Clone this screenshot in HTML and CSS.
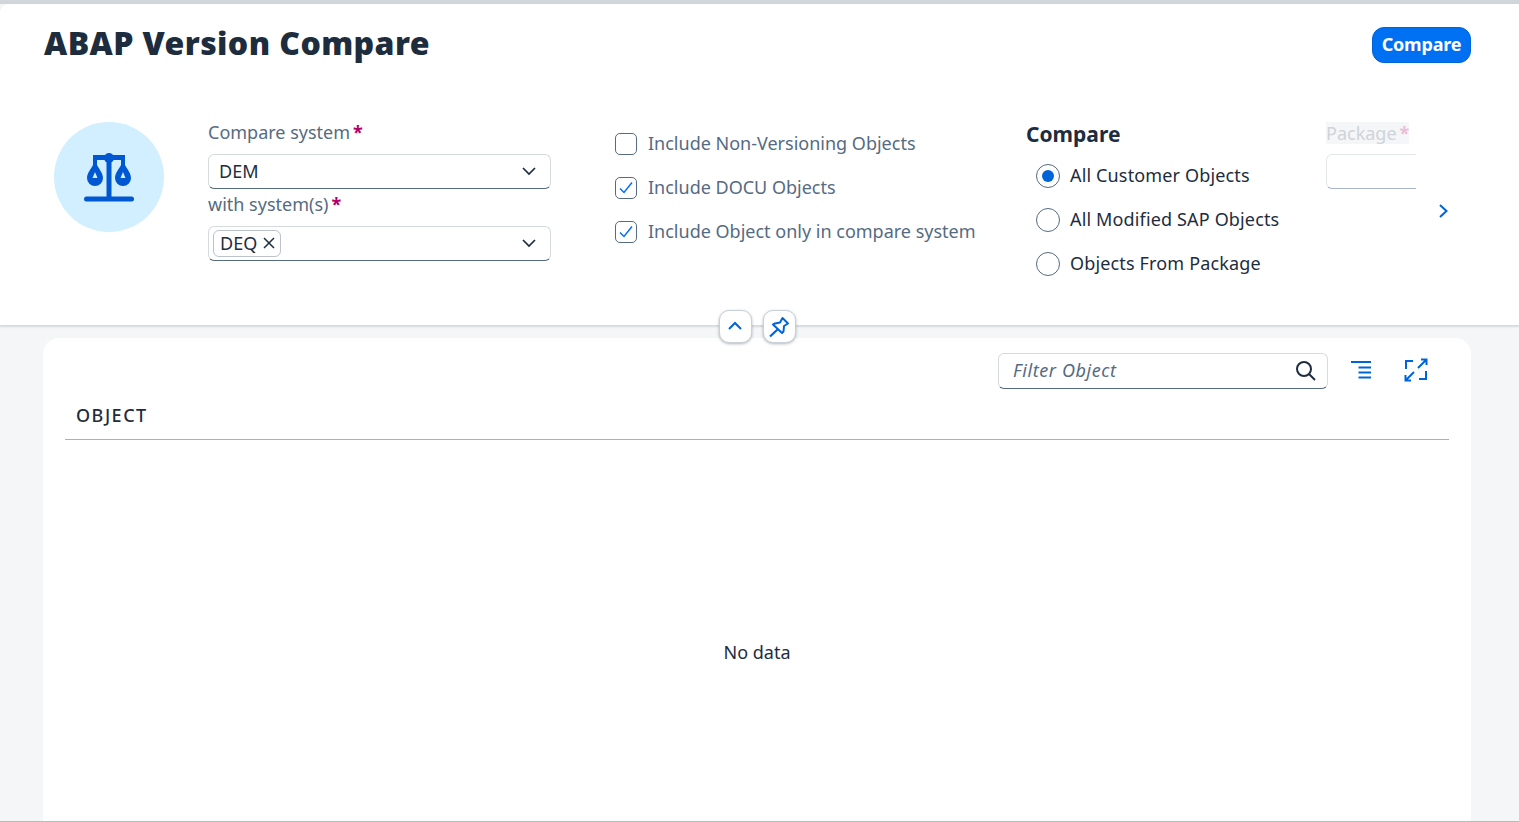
FILE: index.html
```html
<!DOCTYPE html>
<html lang="en">

<head>
    <meta charset="UTF-8">
    <meta name="viewport" content="width=device-width, initial-scale=1.0">
    <title>ABAP Version Compare</title>
    <link rel="stylesheet" href="styles.css">
</head>

<body>
    <div class="page">
        <header class="head">
            <div class="title-row">
                <h1 class="title">ABAP Version Compare</h1>
                <button class="btn-compare">Compare</button>
            </div>
            <div class="filters">
                <div class="avatar">
                    <svg width="52" height="52" viewBox="0 0 52 52" fill="none">
                        <path d="M3.500 48h45" stroke="#0057d2" stroke-width="5" stroke-linecap="round"/>
                        <path d="M26 7v41" stroke="#0057d2" stroke-width="5"/>
                        <circle cx="26" cy="7" r="5" fill="#0057d2"/>
                        <path d="M10 6.500h32" stroke="#0057d2" stroke-width="5"/>
                        <path d="M10 4h4v10c2 4 6 8 6 13a8 8 0 0 1-16 0c0-5 4-9 6-13z" fill="#0057d2"/>
                        <path d="M38 4h4v10c2 4 6 8 6 13a8 8 0 0 1-16 0c0-5 4-9 6-13z" fill="#0057d2"/>
                        <path d="M12 21l2.500 6h-5z" fill="#d1efff"/>
                        <path d="M40 21l2.500 6h-5z" fill="#d1efff"/>
                    </svg>
                </div>

                <div class="systems">
                    <label class="lbl">Compare system<span class="req">*</span></label>
                    <div class="select">
                        <span class="val">DEM</span>
                        <svg class="arrow" width="16" height="16" viewBox="0 0 16 16" fill="none"><path d="M2 5l6 6 6-6" stroke="#1d2d3e" stroke-width="1.700"/></svg>
                    </div>
                    <label class="lbl lbl2">with system(s)<span class="req">*</span></label>
                    <div class="select select-multi">
                        <span class="token">DEQ
                            <svg width="12" height="12" viewBox="0 0 12 12" fill="none"><path d="M1 1l10 10M11 1L1 11" stroke="#1d2d3e" stroke-width="1.500"/></svg>
                        </span>
                        <svg class="arrow" width="16" height="16" viewBox="0 0 16 16" fill="none"><path d="M2 5l6 6 6-6" stroke="#1d2d3e" stroke-width="1.700"/></svg>
                    </div>
                </div>

                <div class="checks">
                    <div class="check-row"><span class="box"></span><span class="txt">Include Non-Versioning Objects</span></div>
                    <div class="check-row"><span class="box"><svg width="16" height="16" viewBox="0 0 16 16" fill="none"><path d="M2 8.500l4 4 8-10" stroke="#0070f2" stroke-width="1.500"/></svg></span><span class="txt">Include DOCU Objects</span></div>
                    <div class="check-row"><span class="box"><svg width="16" height="16" viewBox="0 0 16 16" fill="none"><path d="M2 8.500l4 4 8-10" stroke="#0070f2" stroke-width="1.500"/></svg></span><span class="txt">Include Object only in compare system</span></div>
                </div>

                <div class="radios">
                    <div class="radios-title">Compare</div>
                    <div class="radio-row"><span class="circle on"></span><span class="txt">All Customer Objects</span></div>
                    <div class="radio-row"><span class="circle"></span><span class="txt">All Modified SAP Objects</span></div>
                    <div class="radio-row"><span class="circle"></span><span class="txt">Objects From Package</span></div>
                </div>

                <div class="package">
                    <label class="lbl lbl-pkg"><span class="pkg-text">Package<span class="req">*</span></span></label>
                    <div class="pkg-clip">
                        <div class="select select-pkg"></div>
                    </div>
                </div>

                <svg class="next" width="12" height="16" viewBox="0 0 12 16" fill="none"><path d="M2 2l6.500 6L2 14" stroke="#0064d9" stroke-width="2"/></svg>
            </div>

            <div class="collapse">
                <button class="round-btn">
                    <svg class="up" width="16" height="16" viewBox="0 0 16 16" fill="none"><path d="M2 11l6-6 6 6" stroke="#0064d9" stroke-width="2"/></svg>
                </button>
                <button class="round-btn">
                    <svg class="pin" width="22" height="22" viewBox="0 0 22 22" fill="none">
                        <path d="M14.500 2l5.500 5.500-4 2.500-.5 5.500-1.500 1.500L5 8.500l2-1 5-1z" stroke="#0064d9" stroke-width="2" stroke-linejoin="round"/>
                        <path d="M9.500 13.500l-7.500 7" stroke="#0064d9" stroke-width="2.200"/>
                    </svg>
                </button>
            </div>
        </header>

        <main class="card">
            <div class="toolbar">
                <div class="search">
                    <span class="placeholder">Filter Object</span>
                    <svg class="lens" width="22" height="22" viewBox="0 0 22 22" fill="none"><circle cx="10" cy="10" r="7" stroke="#1d2d3e" stroke-width="2"/><path d="M15 15l6 6" stroke="#1d2d3e" stroke-width="2"/></svg>
                </div>
                <svg class="tool" width="22" height="20" viewBox="0 0 22 20" fill="none">
                    <path d="M1 2h20M8.500 7.500h12.500M8.500 12.500h12.500M8.500 17.500h12.500" stroke="#0064d9" stroke-width="2"/>
                </svg>
                <svg class="tool tool-last" width="24" height="24" viewBox="0 0 24 24" fill="none">
                    <path d="M2 11V3h7M22 13v8h-7" stroke="#0064d9" stroke-width="2"/>
                    <path d="M14 10l8-8M17 1.500h5.500V7M10 14l-8 8M7 22.500H1.500V17" stroke="#0064d9" stroke-width="2"/>
                </svg>
            </div>
            <div class="col-head">OBJECT</div>
            <div class="empty">No data</div>
        </main>
    </div>
</body>

</html>
```

FILE: styles.css
```css
* {
    box-sizing: border-box;
}

html, body {
    margin: 0;
    height: 100%;
    overflow: hidden;
}

body {
    background-color: #f5f6f7;
    font-family: "Noto Sans", "Liberation Sans", sans-serif;
    color: #1d2d3e;
}

.page {
    display: flex;
    flex-direction: column;
    height: 822px;
    border-top: 4px solid #d1d6db;
    border-bottom: 1px solid #b4bfb4;
}

.head {
    position: relative;
    height: 322px;
    flex-shrink: 0;
    background-color: #fff;
    border-top-left-radius: 8px;
    border-bottom: 1px solid #d9dcdf;
    box-shadow: 0 1px 2px rgba(34, 53, 72, .15);
}

.title-row {
    display: flex;
    justify-content: space-between;
    align-items: flex-start;
    padding: 23px 48px 0 44px;
    height: 118px;
}

.title {
    margin: -2px 0 0;
    font-size: 32px;
    line-height: 36px;
    font-weight: 900;
    letter-spacing: .4px;
}

.btn-compare {
    width: 99px;
    height: 36px;
    background-color: #0070f2;
    border: 1px solid #0064d9;
    border-radius: 12px;
    color: #fff;
    font-family: inherit;
    font-size: 18px;
    font-weight: 700;
    letter-spacing: -.2px;
    padding: 0 0 2px;
}

.filters {
    display: flex;
    align-items: flex-start;
    padding-left: 54px;
}

.avatar {
    width: 110px;
    height: 110px;
    border-radius: 50%;
    background-color: #d1efff;
    display: flex;
    align-items: center;
    justify-content: center;
    flex-shrink: 0;
}

.systems {
    width: 343px;
    margin-left: 44px;
    flex-shrink: 0;
}

.lbl {
    display: block;
    height: 32px;
    font-size: 18px;
    line-height: 20px;
    color: #556b82;
}

.lbl2 {
    height: 37px;
    line-height: 30px;
}

.req {
    color: #b0006a;
    font-weight: 700;
    margin-left: 3px;
}

.select {
    display: flex;
    align-items: center;
    justify-content: space-between;
    height: 35px;
    background-color: #fff;
    border: 1px solid #d5dadd;
    border-bottom: 1.500px solid #556b81;
    border-radius: 6px;
    padding: 0 13px 2px 10px;
    font-size: 18px;
}

.select-multi {
    padding-left: 4px;
    padding-bottom: 1px;
}

.token {
    display: flex;
    align-items: center;
    gap: 6px;
    height: 27px;
    padding: 0 5px 1px 6px;
    border: 1px solid #bcc3ca;
    border-radius: 6px;
}

.checks {
    width: 411px;
    margin-left: 64px;
    flex-shrink: 0;
}

.check-row {
    display: flex;
    align-items: center;
    height: 44px;
    font-size: 18px;
    color: #556b82;
}

.txt {
    margin-bottom: 2px;
}

.box {
    display: flex;
    align-items: center;
    justify-content: center;
    width: 22px;
    height: 22px;
    margin-right: 11px;
    border: 1px solid #556b81;
    border-radius: 5px;
}

.radios {
    width: 300px;
    flex-shrink: 0;
}

.radios-title {
    height: 32px;
    font-size: 21px;
    line-height: 24px;
    font-weight: 700;
}

.radio-row {
    display: flex;
    align-items: center;
    height: 44px;
    padding-left: 10px;
    font-size: 18px;
    letter-spacing: .15px;
}

.circle {
    width: 24px;
    height: 24px;
    margin-right: 10px;
    background-color: #fff;
    border: 1px solid #556b81;
    border-radius: 50%;
    display: flex;
    align-items: center;
    justify-content: center;
}

.circle.on::after {
    content: "";
    width: 12px;
    height: 12px;
    border-radius: 50%;
    background-color: #0064d9;
}

.package {
    width: 90px;
    flex-shrink: 0;
}

.lbl-pkg {
    color: #cdd4da;
    white-space: nowrap;
}

.lbl-pkg .req {
    color: #ecbcd8;
}

.pkg-text {
    display: inline-block;
    background-color: #f5f6f7;
    line-height: 22px;
}

.pkg-clip {
    overflow: hidden;
}

.select-pkg {
    width: 120px;
    border-color: #e4e7ea;
    border-bottom-color: #a9b4cf;
}

.next {
    margin-left: 22px;
    margin-top: 81px;
}

.collapse {
    position: absolute;
    left: 719px;
    top: 306px;
    display: flex;
    gap: 11px;
}

.round-btn {
    display: flex;
    align-items: center;
    justify-content: center;
    width: 33px;
    height: 33px;
    padding: 0;
    background-color: #fff;
    border: 1px solid #c9d0d7;
    border-radius: 10px;
    box-shadow: 0 1px 3px rgba(34, 53, 72, .35);
}

.up {
    margin: 0 1px 1px 0;
}

.pin {
    margin-right: 2px;
}

.card {
    display: flex;
    flex-direction: column;
    flex: 1;
    margin: 12px 48px 0 43px;
    padding: 15px 22px 0;
    background-color: #fff;
    border-radius: 16px 16px 0 0;
}

.toolbar {
    display: flex;
    align-items: center;
    justify-content: flex-end;
    height: 36px;
}

.search {
    display: flex;
    align-items: center;
    justify-content: space-between;
    width: 330px;
    height: 36px;
    padding: 0 11px 0 14px;
    border: 1px solid #d5dadd;
    border-bottom: 1.500px solid #556b81;
    border-radius: 6px;
}

.placeholder {
    font-size: 18px;
    font-style: italic;
    letter-spacing: .6px;
    color: #556b82;
    margin-bottom: 2px;
}

.lens {
    margin-bottom: 2px;
}

.tool {
    margin-left: 22px;
    margin-bottom: 2px;
}

.tool-last {
    margin-left: 32px;
    margin-right: 21px;
}

.col-head {
    height: 51px;
    padding: 15px 11px 0;
    font-size: 18px;
    line-height: 22px;
    font-weight: 500;
    letter-spacing: 1.5px;
    border-bottom: 1px solid #a8b2bd;
}

.empty {
    flex: 1;
    display: flex;
    align-items: center;
    justify-content: center;
    font-size: 18px;
    padding-top: 42px;
}
```
